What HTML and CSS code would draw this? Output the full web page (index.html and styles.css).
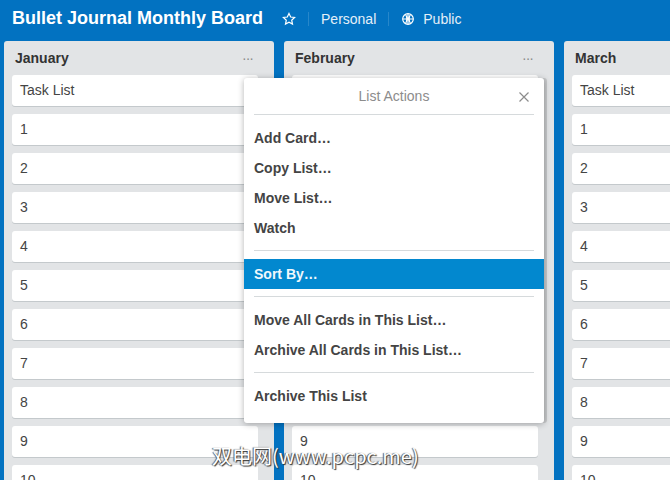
FILE: index.html
```html
<!DOCTYPE html>
<html lang="en">

<head>
  <meta charset="UTF-8" />
  <title>Bullet Journal Monthly Board</title>
  <link rel="stylesheet" href="styles.css">
</head>

<body>

  <header class="board-header">
    <h1>Bullet Journal Monthly Board</h1>
    <svg class="star" width="14" height="14" viewBox="0 0 14 14">
      <path d="M7 1.4l1.7 3.6 3.9.5-2.9 2.7.8 3.9L7 10.200l-3.500 1.900.8-3.900L1.400 5.500l3.900-.5z" />
    </svg>
    <span class="sep"></span>
    <span class="header-item">Personal</span>
    <span class="sep"></span>
    <svg class="globe" width="14" height="14" viewBox="0 0 14 14">
      <circle cx="7" cy="7" r="5.3" />
      <path d="M1.700 7h10.600M7 1.700v10.600M4.700 2.500c1.500 3 1.500 6 0 9M9.300 2.500c-1.500 3-1.500 6 0 9" />
    </svg>
    <span class="header-item">Public</span>
  </header>

  <main class="board">
    <section class="list">
      <div class="list-head">
        <h2>January</h2>
        <span class="dots">···</span>
      </div>
      <div class="card">Task List</div>
      <div class="card">1</div>
      <div class="card">2</div>
      <div class="card">3</div>
      <div class="card">4</div>
      <div class="card">5</div>
      <div class="card">6</div>
      <div class="card">7</div>
      <div class="card">8</div>
      <div class="card">9</div>
      <div class="card">10</div>
    </section>

    <section class="list">
      <div class="list-head">
        <h2>February</h2>
        <span class="dots">···</span>
      </div>
      <div class="card">Task List</div>
      <div class="card">1</div>
      <div class="card">2</div>
      <div class="card">3</div>
      <div class="card">4</div>
      <div class="card">5</div>
      <div class="card">6</div>
      <div class="card">7</div>
      <div class="card">8</div>
      <div class="card">9</div>
      <div class="card">10</div>
    </section>

    <section class="list">
      <div class="list-head">
        <h2>March</h2>
        <span class="dots">···</span>
      </div>
      <div class="card">Task List</div>
      <div class="card">1</div>
      <div class="card">2</div>
      <div class="card">3</div>
      <div class="card">4</div>
      <div class="card">5</div>
      <div class="card">6</div>
      <div class="card">7</div>
      <div class="card">8</div>
      <div class="card">9</div>
      <div class="card">10</div>
    </section>
  </main>

  <div class="popup">
    <div class="popup-title">
      List Actions
      <svg class="close" width="10" height="10" viewBox="0 0 10 10">
        <path d="M.5.500l9 9M9.500.500l-9 9" />
      </svg>
    </div>
    <ul class="menu first">
      <li>Add Card…</li>
      <li>Copy List…</li>
      <li>Move List…</li>
      <li>Watch</li>
    </ul>
    <ul class="menu">
      <li class="active">Sort By…</li>
    </ul>
    <ul class="menu">
      <li>Move All Cards in This List…</li>
      <li>Archive All Cards in This List…</li>
    </ul>
    <ul class="menu">
      <li>Archive This List</li>
    </ul>
  </div>

  <div class="watermark">双电网(www.pcpc.me)</div>

</body>

</html>
```

FILE: styles.css
```css
body {
  font-family: 'Liberation Sans', Arial, sans-serif;
  margin: 0;
  width: 670px;
  height: 480px;
  overflow: hidden;
  position: relative;
  background: #0272c1;
  color: #444;
  font-size: 14px;
}

.board-header {
  display: flex;
  align-items: center;
  height: 41px;
  padding: 0 0 4px 12px;
  box-sizing: border-box;
  color: #fff;
}

.board-header h1 {
  margin: 0 19px 0 0;
  font-size: 18px;
  font-weight: 700;
  white-space: nowrap;
}

.star,
.globe {
  flex: none;
  fill: none;
  stroke: #fff;
  stroke-width: 1.2;
}

.sep {
  width: 1px;
  height: 14px;
  margin: 0 12px 0 12px;
  background: rgba(255, 255, 255, 0.15);
}

.header-item {
  color: #e4eff8;
}

.globe {
  margin-right: 8px;
}

.board {
  display: flex;
  gap: 10px;
  padding-left: 4px;
}

.list {
  flex: 0 0 270px;
  box-sizing: border-box;
  padding: 0 16px 0 8px;
  background: #e2e4e6;
  border-radius: 3px 3px 0 0;
}

.list-head {
  display: flex;
  justify-content: space-between;
  align-items: center;
  height: 34px;
  padding: 0 5px 0 3px;
}

.list-head h2 {
  margin: 0;
  font-size: 14px;
  font-weight: 700;
  color: #333;
}

.dots {
  color: #8c8c8c;
  font-size: 14px;
  letter-spacing: -1px;
}

.card {
  height: 31px;
  margin-bottom: 8px;
  padding: 0 8px;
  line-height: 30px;
  background: #fff;
  border-radius: 3px;
  box-shadow: 0 1px 0 #c4c9cc;
}

.popup {
  position: absolute;
  left: 244px;
  top: 78px;
  width: 300px;
  height: 345px;
  background: #fff;
  border-radius: 3px;
  box-shadow: 0 1px 6px rgba(0, 0, 0, 0.3), 3px 0 0 rgba(0, 0, 0, 0.12);
}

.popup-title {
  position: relative;
  height: 36px;
  margin: 0 10px;
  line-height: 36px;
  text-align: center;
  color: #8c8c8c;
  border-bottom: 1px solid #d6dadc;
}

.close {
  position: absolute;
  right: 5px;
  top: 14px;
  fill: none;
  stroke: #8c8c8c;
  stroke-width: 1.200;
}

.menu {
  list-style: none;
  margin: 0;
  padding: 8px 0;
  position: relative;
}

.menu::after {
  content: "";
  position: absolute;
  left: 10px;
  right: 10px;
  bottom: 0;
  height: 1px;
  background: #d6dadc;
}

.menu:last-child::after {
  display: none;
}

.menu li {
  height: 30px;
  padding: 0 10px;
  line-height: 30px;
  font-weight: 700;
  color: #444;
}

.menu li.active {
  background: #0288cf;
  color: #f0f8fc;
}

.watermark {
  position: absolute;
  left: 212px;
  top: 444px;
  font-family: 'Noto Sans CJK SC', sans-serif;
  font-size: 20px;
  line-height: 24px;
  color: #fff;
  white-space: nowrap;
  text-shadow: 1px 1px 1px #333, -1px 0 1px #555;
}
```
